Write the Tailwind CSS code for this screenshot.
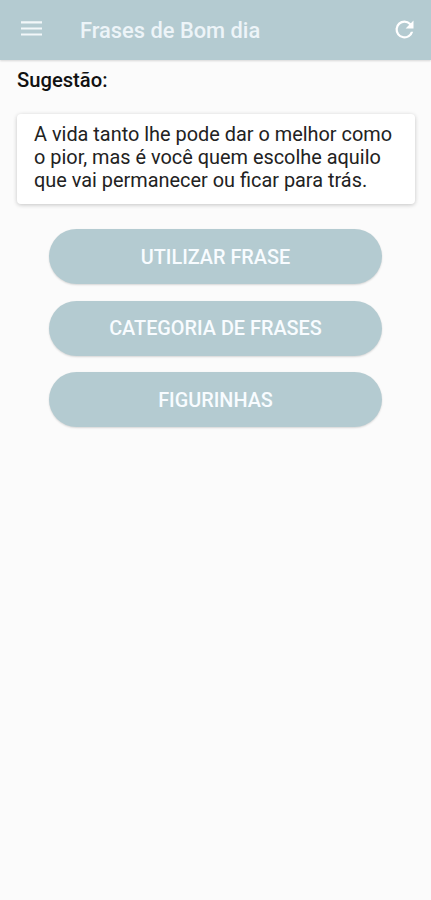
<!DOCTYPE html>
<html lang="pt-BR">

<head>
    <meta charset="UTF-8" />
    <meta name="viewport" content="width=device-width, initial-scale=1.0" />
    <title>Frases de Bom dia</title>
    <script src="https://cdn.jsdelivr.net/npm/@tailwindcss/browser@4"></script>
</head>

<body class="bg-[#fbfbfb] min-h-screen font-[Roboto,sans-serif] text-black">
    <header class="flex items-center h-[60px] pl-[21px] pr-[13px] bg-[#b4cbd1] shadow-[0_1px_2px_rgba(0,0,0,0.15)]">
        <button type="button" aria-label="Menu" class="shrink-0 pb-1">
            <svg class="block w-[21px] h-[16px]" viewBox="0 0 21 16" fill="#f2f7f9">
                <path d="M0 1.3h21v2.1H0zM0 7.4h21v2.1H0zM0 13.5h21v2.1H0z" />
            </svg>
        </button>
        <h1 class="ml-[38px] pt-[2px] text-[21.85px] leading-[26px] font-medium text-[#edf4f8] whitespace-nowrap">Frases de Bom dia</h1>
        <button type="button" aria-label="Atualizar" class="ml-auto shrink-0 pb-[2px]">
            <svg class="block w-[27px] h-[27px]" viewBox="0 0 24 24" fill="#ffffff">
                <path d="M17.65 6.35A7.96 7.96 0 0 0 12 4a8 8 0 1 0 7.73 10h-2.08A6 6 0 1 1 12 6c1.66 0 3.14.69 4.22 1.78L13 11h7V4l-2.35 2.35z" />
            </svg>
        </button>
    </header>

    <main class="px-[17px] pt-2">
        <h2 class="text-[20.2px] leading-[24px] font-medium text-[#111111]">Sugestão:</h2>

        <div class="mt-[22px] mr-[-1px] h-[90px] pl-[17px] pt-[9px] rounded-[4px] bg-white shadow-[0_1px_4px_rgba(0,0,0,0.22)]">
            <p class="text-[19.9px] leading-[23px] text-[#222222] whitespace-nowrap">A vida tanto lhe pode dar o melhor como<br />o pior, mas é você quem escolhe aquilo<br />que vai permanecer ou ficar para trás.</p>
        </div>

        <div class="mt-[25px] ml-[32px] mr-[32px] flex flex-col gap-[16.5px]">
            <button type="button" class="h-[55px] pt-[3px] rounded-full bg-[#b4cbd1] text-[19.85px] font-medium text-[#f8fcff] shadow-[0_1px_2px_rgba(0,0,0,0.15)]">UTILIZAR FRASE</button>
            <button type="button" class="h-[55px] pt-[2px] rounded-full bg-[#b4cbd1] text-[19.85px] font-medium text-[#f8fcff] shadow-[0_1px_2px_rgba(0,0,0,0.15)]">CATEGORIA DE FRASES</button>
            <button type="button" class="h-[55px] pt-[3px] rounded-full bg-[#b4cbd1] text-[19.85px] font-medium text-[#f8fcff] shadow-[0_1px_2px_rgba(0,0,0,0.15)]">FIGURINHAS</button>
        </div>
    </main>
</body>

</html>
